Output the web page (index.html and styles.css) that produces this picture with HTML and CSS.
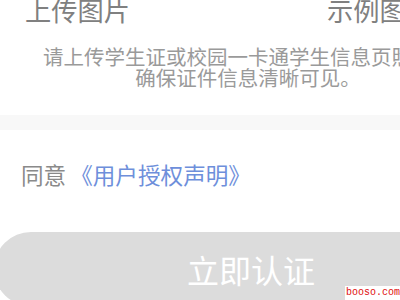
FILE: index.html
```html
<!DOCTYPE html>
<html lang="zh-CN">
<head>
<meta charset="utf-8">
<link rel="stylesheet" href="styles.css">
</head>
<body>
<div class="page">
  <div class="tabs">
    <div class="tab">上传图片</div>
    <div class="tab tab-right">示例图片</div>
  </div>
  <p class="tip">请上传学生证或校园一卡通学生信息页照片，<br>确保证件信息清晰可见。</p>
  <div class="band"></div>
  <div class="agree">同意<a class="link">《用户授权声明》</a></div>
  <div class="btn">立即认证</div>
</div>
<div class="mark">booso.com</div>
</body>
</html>
```
FILE: styles.css
```css
html, body {
  margin: 0;
  padding: 0;
  background: #fff;
  overflow: hidden;
  width: 400px;
  height: 300px;
}
body {
  font-family: "Noto Sans CJK SC", "Noto Sans", sans-serif;
  position: relative;
}
.page {
  width: 496px;
  margin-top: -3px;
}
.tabs {
  display: flex;
  padding-left: 25px;
  gap: 197px;
}
.tab {
  font-size: 26.25px;
  line-height: 26px;
  color: #808080;
  white-space: nowrap;
}
.tip {
  margin: 23px 0 0;
  text-align: center;
  font-size: 20.5px;
  line-height: 20.5px;
  color: #9a9a9a;
  white-space: nowrap;
}
.band {
  margin-top: 28px;
  height: 15px;
  background: #f8f8f8;
}
.agree {
  margin-top: 33px;
  padding-left: 21px;
  font-size: 22.6px;
  line-height: 24px;
  color: #8a8a8a;
  white-space: nowrap;
}
.link {
  margin-left: 4px;
  color: #6e8fdb;
}
.btn {
  margin: 45px -6px 0;
  height: 74px;
  border-radius: 37px;
  background: #dcdcdc;
  color: #fff;
  font-size: 32px;
  display: flex;
  align-items: center;
  justify-content: center;
  padding-left: 6px;
}
.mark {
  position: absolute;
  right: 0;
  bottom: 0;
  width: 55px;
  height: 14px;
  background: #fff;
  color: #e01010;
  font-family: "Liberation Mono", monospace;
  font-size: 10px;
  line-height: 14px;
  text-align: right;
  white-space: nowrap;
}
```
